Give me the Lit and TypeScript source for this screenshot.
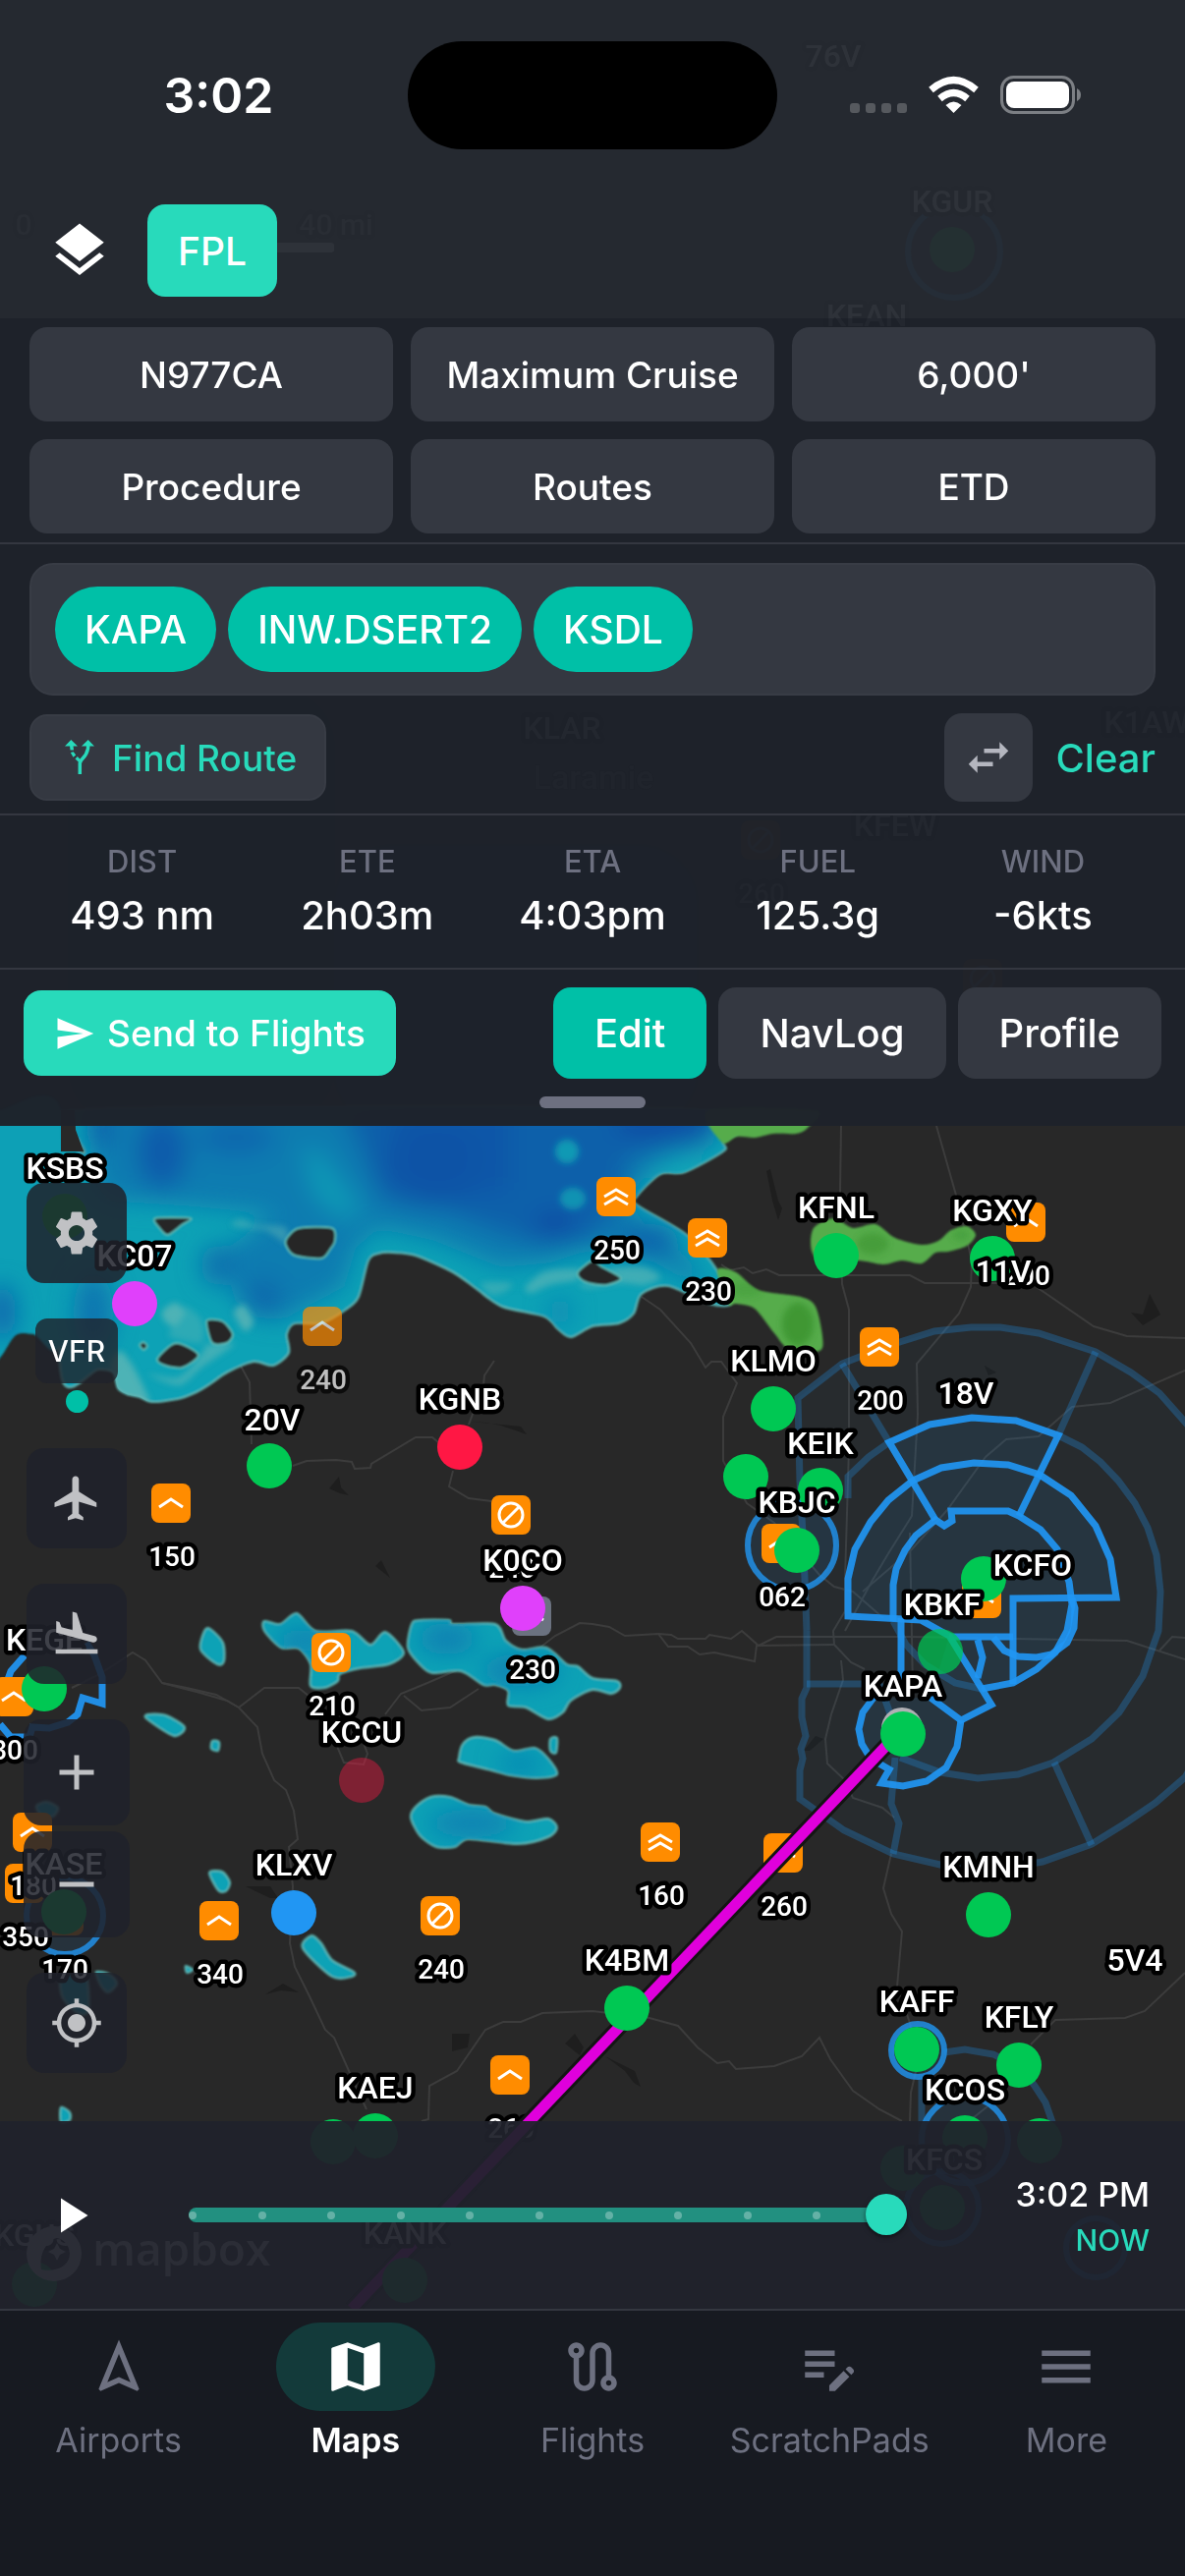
import { LitElement, html, svg, css } from "lit";
import { customElement, state } from "lit/decorators.js";
import { classMap } from "lit/directives/class-map.js";

type Pt = [number, number];

const pts = (s: string): Pt[] =>
  s.trim().split(/\s+/).map((p) => p.split(",").map(Number) as Pt);

/** Closed Catmull-Rom curve through the points, as an SVG path. */
const blob = (s: string): string => {
  const p = pts(s);
  const n = p.length;
  let d = `M${p[0][0]} ${p[0][1]}`;
  for (let i = 0; i < n; i++) {
    const a = p[(i - 1 + n) % n], b = p[i], c = p[(i + 1) % n], e = p[(i + 2) % n];
    const f = (v: number) => v.toFixed(1);
    d += `C${f(b[0] + (c[0] - a[0]) / 7)} ${f(b[1] + (c[1] - a[1]) / 7)} ${f(c[0] - (e[0] - b[0]) / 7)} ${f(c[1] - (e[1] - b[1]) / 7)} ${c[0]} ${c[1]}`;
  }
  return d + "Z";
};

const GREEN = "#00c853";
const RED = "#ff1744";
const PURPLE = "#e040fb";
const BLUE = "#2196f3";

const ROADS = [
  "73,1718 100,1705 135,1682 148,1690 165,1713 200,1722 231,1731 243,1738 262,1758 267,1785 279,1812 291,1822 299,1843 303,1872 294,1880 298,1920 295,1978 300,2002 315,2032 331,2066 340,2074 356,2110 373,2147",
  "243,1738 269,1718 304,1718 319,1730",
  "165,1713 190,1718 220,1725 243,1738",
  "392,1745 408,1724 435,1713 465,1700 492,1687 530,1692 565,1665 590,1652 603,1653 620,1656 636,1665 670,1663 680,1676 700,1676 712,1684 727,1682 768,1691 770,1675 849,1674",
  "670,1663 683,1664 690,1668 718,1668 722,1664 744,1668 755,1660 772,1675 790,1666 926,1666 1147,1670 1206,1689",
  "411,1726 429,1741 458,1738 487,1719",
  "342,1775 350,1794 370,1796 374,1785 365,1760",
  "429,2159 436,2157 437,2123 465,2108 494,2066 512,2058 530,2058 552,2049 603,2047 661,2054 690,2062 710,2084 730,2100 742,2098 749,2106 788,2103 816,2093 834,2074 845,2096 868,2128 895,2147 918,2159",
  "907,1887 899,1922 907,1948 918,1966 913,2022 926,2059 934,2100 927,2130 926,2159",
  "1206,2008 1165,2047 1145,2054 1074,2056 1049,2081",
  "1010,2140 985,2160",
  "856,1146 855,1212 857,1307 864,1333 864,1473 860,1607 860,1640 848,1660 849,1674 866,1692 880,1699",
  "856,1690 858,1710 846,1745 840,1770 842,1795 860,1812 868,1830 898,1840 910,1850",
  "953,1146 974,1220 989,1283 988,1310 976,1337 933,1388 934,1440 928,1543 903,1583 887,1610 860,1660",
  "926,1560 929,1720",
  "734,1287 743,1293 757,1290 766,1296 780,1292 793,1298 926,1298 941,1306 1049,1306 1113,1350 1147,1360 1206,1362",
  "1206,1395 1130,1428 1091,1432 1057,1462 1024,1465 1003,1483 964,1537 928,1577 878,1620",
  "653,1320 672,1333 703,1367 718,1392 724,1386 734,1386 750,1408 736,1442 736,1487 760,1530 788,1550 834,1603 849,1615 868,1620 899,1647",
  "154,1307 173,1310 175,1305 188,1313 208,1345 238,1377 254,1407 256,1470",
  "298,1492 312,1487 342,1486 358,1488 361,1495 377,1494 378,1490 423,1463 440,1463 446,1468",
  "461,1497 457,1513 477,1525 500,1528",
  "477,1450 492,1410 493,1400 503,1385",
  "1180,1680 1193,1666 1206,1667",
];

const TERRAIN = [
  "780,1192 784,1190 792,1222 796,1230 792,1242 786,1222",
  "1151,1336 1163,1338 1170,1317 1181,1338 1163,1349",
  "335,1515 345,1503 347,1514 355,1522 346,1520",
  "382,1594 388,1588 397,1606",
  "480,1447 530,1452 536,1460 510,1451 495,1448",
  "250,1920 275,1920 283,1932 275,1932",
  "270,2030 288,2019 304,2028 286,2026",
  "460,2070 478,2070 476,2084 460,2088",
  "575,2080 585,2070 594,2084 590,2092",
  "616,2093 646,2108 652,2124 645,2120 636,2108",
  "818,1782 830,1767 838,1770 824,1782",
  "1002,1390 1014,1397 1006,1400",
];

const RADAR_SMALL = [
  "269,1650 285,1653 302,1642 321,1660 358,1660 377,1674 392,1661 411,1682 396,1694 367,1698 346,1704 344,1711 331,1718 316,1716 316,1694 304,1678 286,1677 269,1660",
  "419,1653 427,1649 457,1649 461,1653 504,1653 515,1670 531,1679 556,1677 577,1694 588,1696 603,1708 628,1711 631,1718 622,1724 603,1720 581,1731 573,1743 558,1750 535,1738 517,1736 517,1721 504,1715 492,1715 469,1701 440,1703 427,1694 415,1677",
  "467,1789 471,1775 483,1768 504,1771 523,1782 544,1779 558,1790 567,1806 546,1810 519,1807 500,1802 469,1794",
  "418,1850 423,1839 438,1829 458,1829 477,1837 494,1839 504,1846 535,1854 558,1851 567,1860 558,1870 527,1877 477,1872 463,1880 444,1880 427,1868",
  "208,1660 214,1658 227,1672 228,1691 221,1694 204,1679",
  "150,1745 169,1746 188,1758 177,1767 150,1750",
  "216,1772 223,1773 222,1782 215,1780",
  "560,1770 567,1769 566,1784 560,1782",
  "213,1906 226,1905 234,1916 230,1925 222,1924",
  "317,1970 327,1978 338,1995 360,2007 358,2012 338,2012 308,1983",
  "98,2007 112,2010 119,2019 110,2028 102,2020",
  "63,2009 87,2009 90,2046 79,2049 63,2032",
  "37,1838 48,1834 59,1840 54,1849 42,1848",
  "62,2145 71,2150 71,2158 62,2160",
  "189,2001 196,2005 190,2008",
];

const RADAR_MAIN =
  "76,1130 80,1160 86,1174 62,1182 62,1400 100,1394 115,1397 120,1413 129,1419 142,1422 154,1427 181,1424 200,1417 215,1408 231,1397 258,1386 278,1390 294,1377 292,1358 300,1347 327,1347 352,1333 365,1320 375,1283 385,1276 400,1275 423,1278 461,1295 485,1312 511,1330 554,1340 568,1353 581,1361 603,1350 630,1347 645,1337 653,1317 680,1309 722,1327 744,1326 730,1293 699,1257 649,1227 648,1218 672,1195 697,1193 736,1172 736,1163 722,1130";

const HOLES = [
  "158,1240 194,1240 185,1247 171,1257 163,1251",
  "292,1260 304,1250 338,1250 341,1263 336,1272 327,1281 300,1278 291,1268",
  "210,1347 213,1343 227,1345 237,1358 231,1367 216,1367",
  "160,1383 179,1367 202,1379 186,1392 168,1390",
  "142,1369 146,1366 150,1370 146,1374",
  "588,1295 603,1283 612,1289 632,1301 618,1308 603,1307 592,1303",
];

const RADAR_LEFT = "0,1130 62,1130 62,1362 34,1358 16,1359 0,1382 -10,1382 -10,1130";

const RAIN = [
  "722,1130 830,1130 822,1148 810,1154 787,1154 768,1158 750,1157 735,1163",
  "826,1273 828,1250 849,1240 868,1250 891,1246 911,1260 938,1267 955,1263 968,1252 984,1248 993,1257 984,1268 965,1274 952,1275 938,1286 918,1283 899,1287 872,1283 840,1290",
  "730,1293 749,1295 772,1313 815,1320 830,1330 837,1360 834,1375 803,1373 788,1357 768,1332 749,1327 741,1327",
];

const AIRSPACE_FAINT = [
  "821,1660 818,1580 814,1507 812,1423 857,1388 903,1370 951,1355 988,1351 1018,1351 1057,1357 1115,1376 1151,1397 1180,1418 1211,1453 1240,1510 1256,1600 1250,1700 1230,1770 1206,1809 1176,1835 1145,1856 1111,1877 1061,1895 1007,1904 961,1899 909,1887 859,1863 814,1831 814,1802 817,1790 815,1780 820,1767 816,1748 816,1729 821,1718 821,1660",
  "863,1525 863,1503 884,1483 905,1468",
  "1077,1461 1101,1473 1120,1488 1138,1507 1155,1530 1168,1555 1177,1583 1181,1620 1179,1660 1174,1674 1163,1706 1139,1743 1111,1770 1072,1794 1036,1806 995,1810 957,1804 916,1789",
  "857,1388 905,1468",
  "1115,1376 1077,1461",
  "1073,1794 1111,1878",
  "821,1714 895,1714 908,1750",
  "911,1789 907,1836 915,1856 909,1887",
  "909,1650 922,1674 941,1694 972,1713 999,1719",
  "938,2190 938,2115",
  "961,2089 982,2086 1011,2091 1040,2106 1053,2123 1064,2140 1071,2160 1070,2185",
];

/** Filled interior of the airspace shelves, under their outlines. */
const AIRSPACE_FILL =
  "863,1645 863,1607 870,1577 886,1549 904,1527 929,1507 905,1468 946,1450 989,1443 1034,1446 1077,1461 1058,1501 1090,1522 1115,1553 1130,1587 1136,1626 1091,1630 1093,1657 1074,1682 1055,1699 1031,1713 999,1719 1009,1735 978,1751 974,1778 963,1799 943,1813 919,1818 897,1815 905,1801 886,1790 874,1760 889,1728 947,1728 966,1665 937,1649";

const AIRSPACE_STRONG = [
  "952,1547 905,1468 946,1450 989,1443 1034,1446 1077,1461 1037,1543",
  "947,1728 978,1751 1009,1735 966,1665 937,1649 863,1645 863,1607 870,1577 886,1549 904,1527 929,1507 958,1494 991,1489 1026,1491 1058,1501 1090,1522 1115,1553 1130,1587 1136,1626 1031,1627 1031,1714",
  "909,1650 909,1613 912,1597 921,1578 932,1563 952,1547 961,1553 969,1548 968,1538 1026,1538 1037,1543 1059,1557 1076,1577 1088,1610 1091,1633 1086,1660 1074,1682 1055,1699 1031,1713 999,1719",
  "1091,1627 1094,1637 1093,1657 1086,1672 1070,1684 1055,1687 1036,1686 1022,1680 1011,1667",
  "917,1647 917,1721",
  "966,1666 1031,1666",
  "995,1669 1000,1687 995,1708",
  "889,1728 878,1743 874,1760 877,1775 886,1790 905,1801 897,1815 919,1818 943,1813 963,1799 974,1778 978,1751",
  "25,1685 11,1701 6,1715",
  "88,1672 96,1685 104,1707 104,1734 84,1728 79,1745 69,1753 50,1759 33,1758 30,1768 11,1768 0,1755",
];

interface Ring { x: number; y: number; r: number }
const RINGS: Ring[] = [
  { x: 806, y: 1573, r: 45 },
  { x: 66, y: 1950, r: 39 },
  { x: 934, y: 2087, r: 27 },
  { x: 982, y: 2178, r: 44 },
  { x: 959, y: 2247, r: 37 },
  { x: 971, y: 256, r: 47 },
  { x: 1115, y: 2288, r: 30 },
];

type Kind = "single" | "double" | "slash";
interface Report { x: number; y: number; kind: Kind; level?: string; ly?: number; dim?: boolean; grey?: boolean; faint?: boolean }
const REPORTS: Report[] = [
  { x: 627, y: 1218, kind: "double", level: "250", ly: 1272 },
  { x: 720, y: 1260, kind: "double", level: "230" },
  { x: 1044, y: 1244, kind: "single", level: "200" },
  { x: 895, y: 1371, kind: "double", level: "200" },
  { x: 795, y: 1571, kind: "single", level: "062" },
  { x: 999, y: 1627, kind: "single" },
  { x: 328, y: 1350, kind: "single", level: "240", dim: true },
  { x: 174, y: 1530, kind: "single", level: "150" },
  { x: 520, y: 1542, kind: "slash", level: "240" },
  { x: 541, y: 1645, kind: "single", level: "230", grey: true },
  { x: 337, y: 1682, kind: "slash", level: "210" },
  { x: 14, y: 1727, kind: "single", level: "300" },
  { x: 33, y: 1865, kind: "single", level: "180" },
  { x: 25, y: 1917, kind: "single", level: "350" },
  { x: 65, y: 1950, kind: "single", level: "170" },
  { x: 223, y: 1955, kind: "single", level: "340" },
  { x: 448, y: 1950, kind: "slash", level: "240" },
  { x: 519, y: 2112, kind: "single", level: "260" },
  { x: 672, y: 1875, kind: "double", level: "160" },
  { x: 797, y: 1886, kind: "single", level: "260" },
  { x: 774, y: 855, kind: "slash", level: "260", faint: true },
  { x: 1000, y: 996, kind: "slash", faint: true },
];

interface Airport { id?: string; x?: number; y?: number; c?: string; lx?: number; ly?: number; o?: number }
const AIRPORTS: Airport[] = [
  { id: "KSBS", x: 66, y: 1238, c: GREEN, ly: 1188 },
  { id: "KC07", x: 137, y: 1327, c: PURPLE, ly: 1277 },
  { id: "20V", x: 274, y: 1492, c: GREEN, lx: 277, ly: 1444 },
  { id: "KGNB", x: 468, y: 1473, c: RED, ly: 1423 },
  { id: "K0CO", x: 532, y: 1637, c: PURPLE, ly: 1587 },
  { id: "KFNL", x: 851, y: 1278, c: GREEN, ly: 1228 },
  { id: "KGXY", x: 1010, y: 1281, c: GREEN, ly: 1231 },
  { id: "11V", lx: 1021, ly: 1293 },
  { id: "18V", lx: 983, ly: 1417 },
  { id: "KLMO", x: 787, y: 1434, c: GREEN, ly: 1384 },
  { x: 759, y: 1503, c: GREEN },
  { id: "KEIK", x: 835, y: 1517, c: GREEN, ly: 1468 },
  { id: "KBJC", x: 811, y: 1578, c: GREEN, ly: 1528 },
  { id: "KCFO", x: 1001, y: 1607, c: GREEN, lx: 1051, ly: 1592 },
  { id: "KBKF", x: 957, y: 1681, c: GREEN, lx: 959, ly: 1632, o: 0.72 },
  { id: "KAPA", x: 919, y: 1765, c: GREEN, ly: 1715 },
  { id: "KMNH", x: 1006, y: 1949, c: GREEN, ly: 1899 },
  { id: "5V4", lx: 1155, ly: 1994 },
  { id: "KAFF", x: 933, y: 2086, c: GREEN, ly: 2036 },
  { id: "KFLY", x: 1037, y: 2102, c: GREEN, ly: 2052 },
  { id: "KCOS", x: 982, y: 2176, c: GREEN, ly: 2126 },
  { x: 1058, y: 2179, c: GREEN },
  { x: 919, y: 2207, c: GREEN },
  { id: "KFCS", x: 959, y: 2247, c: GREEN, lx: 961, ly: 2197 },
  { x: 339, y: 2180, c: GREEN },
  { id: "KAEJ", x: 382, y: 2174, c: GREEN, ly: 2124 },
  { id: "KANK", x: 412, y: 2321, c: GREEN, ly: 2272 },
  { id: "KGUS", x: 35, y: 2325, c: GREEN, ly: 2274 },
  { id: "K4BM", x: 638, y: 2044, c: GREEN, ly: 1994 },
  { id: "KLXV", x: 299, y: 1947, c: BLUE, ly: 1897 },
  { id: "KCCU", x: 368, y: 1812, c: RED, ly: 1762, o: 0.4 },
  { id: "KEGE", x: 45, y: 1719, c: GREEN, ly: 1668 },
  { id: "KASE", x: 65, y: 1946, c: GREEN, ly: 1896 },
  { id: "KGUR", x: 969, y: 254, c: GREEN, ly: 204 },
  { id: "KEAN", lx: 882, ly: 320 },
  { id: "76V", lx: 848, ly: 56 },
  { id: "KLAR", lx: 572, ly: 740 },
  { id: "K1AW", lx: 1167, ly: 734 },
  { id: "KFEW", lx: 911, ly: 839 },
];

@customElement("route-map")
class RouteMap extends LitElement {
  static styles = css`
    :host { display: block; }
    svg { display: block; width: 100%; height: 100%; }
    text {
      font-family: Roboto, "Liberation Sans", sans-serif;
      font-weight: 500;
      text-anchor: middle;
      fill: #fff;
      stroke: #000;
      stroke-width: 9px;
      stroke-linejoin: round;
      paint-order: stroke;
    }
    .airport { font-size: 32px; }
    .level { font-size: 28px; }
    .dim { opacity: 0.7; }
    .faint-report { opacity: 0.6; }
    .scale { font-size: 30px; fill: #777; }
    .town { font-size: 34px; fill: #777; stroke-width: 2px; }
    .brand { font-family: "Open Sans", Lato, sans-serif; font-weight: 600; font-size: 46px; text-anchor: start; stroke: none; }
    .road { fill: none; stroke: #3c3c3c; stroke-width: 2px; }
    .faint { fill: none; stroke: #2196f3; stroke-opacity: 0.28; stroke-width: 7px; }
    .strong { fill: none; stroke: #2196f3; stroke-opacity: 0.92; stroke-width: 7px; }
    .ring { fill: #2196f3; fill-opacity: 0.1; stroke: #2196f3; stroke-opacity: 0.8; stroke-width: 6px; }
    .edge { stroke: #5fb8b4; stroke-width: 2px; }
    .glyph { fill: none; stroke: #fff; stroke-width: 3px; }
  `;

  private badge(r: Report) {
    const mark =
      r.kind === "slash"
        ? svg`<circle class="glyph" r="12"></circle><path class="glyph" d="M-8 8L8-8"></path>`
        : r.kind === "double"
          ? svg`<path class="glyph" d="M-12 0L0-7L12 0M-12 8L0 1L12 8"></path>`
          : svg`<path class="glyph" d="M-12 4L0-4L12 4"></path>`;
    return svg`<g class=${r.dim ? "dim" : r.faint ? "faint-report" : ""} transform="translate(${r.x} ${r.y})">
      <rect x="-20" y="-20" width="40" height="40" rx="8" fill=${r.grey ? "#6b7280" : "#ff8c00"}></rect>${mark}
    </g>`;
  }

  private level(r: Report) {
    return r.level
      ? svg`<text class="level ${r.dim ? "dim" : r.faint ? "faint-report" : ""}" x=${r.x + 1} y=${(r.ly ?? r.y + 54) + 10}>${r.level}</text>`
      : "";
  }

  render() {
    return html`<svg viewBox="0 0 1206 2622" preserveAspectRatio="xMidYMid slice" role="img" aria-label="Route map">
      <defs>
        <filter id="soft" x="-40%" y="-40%" width="180%" height="180%"><feGaussianBlur stdDeviation="12"></feGaussianBlur></filter>
        <filter id="mist" x="-40%" y="-40%" width="180%" height="180%"><feGaussianBlur stdDeviation="3"></feGaussianBlur></filter>
        <filter id="fine"><feGaussianBlur stdDeviation="1"></feGaussianBlur></filter>
        <clipPath id="wet"><path d=${blob(RADAR_MAIN)}></path><path d=${blob(RADAR_LEFT)}></path>${RADAR_SMALL.map((s) => svg`<path d=${blob(s)}></path>`)}</clipPath>
        <clipPath id="rain">${RAIN.map((s) => svg`<path d=${blob(s)}></path>`)}</clipPath>
      </defs>
      <rect width="1206" height="2622" fill="#282828"></rect>
      ${TERRAIN.map((s) => svg`<polygon points=${s} fill="#1e1e1e"></polygon>`)}
      ${ROADS.map((s) => svg`<polyline class="road" points=${s}></polyline>`)}

      <g filter="url(#fine)">
        <rect x="70" y="700" width="270" height="446" rx="60" fill="#10648a" opacity="0.3"></rect>
        <rect x="340" y="860" width="370" height="290" rx="60" fill="#10648a" opacity="0.4"></rect>
        <path class="edge" d=${blob(RADAR_MAIN)} fill="#10a2b6"></path>
        <path d=${blob(RADAR_LEFT)} fill="#10a0b6"></path>
        ${RADAR_SMALL.map((s) => svg`<path class="edge" d=${blob(s)} fill="#10a2b6"></path>`)}
      </g>
      <g clip-path="url(#wet)">
        <g filter="url(#soft)">
          <path d="M88 1120H735L725 1165L690 1178L662 1190L638 1220L655 1245L700 1280L725 1312L690 1298L665 1284L600 1272L560 1285L510 1290L440 1262L385 1250L362 1270L350 1310L315 1328L285 1345L240 1325L225 1275L280 1236L200 1228L110 1222L95 1200Z" fill="#107cb0"></path>
          <path d="M345 1120H740L725 1155L680 1165L640 1180L632 1230L600 1262L550 1268L500 1252L440 1228L392 1224L375 1190Z" fill="#0f61aa"></path>
          <path d="M400 1130H520V1210L430 1232L385 1200Z" fill="#0e57a8"></path>
          <ellipse cx="165" cy="1172" rx="26" ry="38" fill="#0e5cab"></ellipse>
          <ellipse cx="102" cy="1150" rx="14" ry="18" fill="#0e60ac"></ellipse>
          <ellipse cx="240" cy="1158" rx="40" ry="18" fill="#1068ae"></ellipse>
          <ellipse cx="445" cy="1178" rx="40" ry="36" fill="#0d52a6"></ellipse>
          <ellipse cx="565" cy="1246" rx="22" ry="12" fill="#0c4ca4"></ellipse>
          <ellipse cx="675" cy="1145" rx="50" ry="18" fill="#0c4fa6"></ellipse>
          <ellipse cx="222" cy="1288" rx="18" ry="20" fill="#0f6fae"></ellipse>
          <ellipse cx="268" cy="1322" rx="18" ry="20" fill="#0f68ac"></ellipse>
          <ellipse cx="95" cy="1335" rx="20" ry="40" fill="#0f76b0"></ellipse>
          <ellipse cx="2" cy="1335" rx="14" ry="28" fill="#0f66ae"></ellipse>
          <ellipse cx="660" cy="1262" rx="30" ry="16" fill="#0f62ac"></ellipse>
          <ellipse cx="570" cy="1335" rx="12" ry="16" fill="#0f88b4"></ellipse>
          <path d="M308 1170L322 1170L350 1205L370 1235L345 1242L318 1215Z" fill="#1098b6"></path>
          <ellipse cx="692" cy="1192" rx="22" ry="10" fill="#12a8b8"></ellipse>
          <ellipse cx="455" cy="1668" rx="30" ry="16" fill="#0f80b2"></ellipse>
          <ellipse cx="530" cy="1700" rx="40" ry="16" fill="#0f80b2"></ellipse>
          <ellipse cx="310" cy="1670" rx="30" ry="12" fill="#0f80b2"></ellipse>
          <ellipse cx="480" cy="1856" rx="44" ry="14" fill="#0f80b2"></ellipse>
          <ellipse cx="530" cy="1795" rx="24" ry="8" fill="#0f80b2"></ellipse>
        </g>
        <g fill="#12a8b6" filter="url(#mist)">
          <ellipse cx="577" cy="1172" rx="12" ry="12" opacity="0.8"></ellipse>
          <ellipse cx="583" cy="1220" rx="13" ry="11" opacity="0.7"></ellipse>
        </g>
        <g fill="#63b8b6" filter="url(#mist)" opacity="0.75">
          <path d=${blob("122,1375 135,1390 150,1420 150,1428 118,1420 112,1390")}></path>
          <path d=${blob("165,1335 178,1326 188,1336 178,1350 168,1345")}></path>
          <path d=${blob("238,1335 248,1328 258,1345 250,1355 242,1345")}></path>
          <path d=${blob("150,1398 182,1402 205,1378 212,1368 238,1368 205,1392 182,1410")} opacity="0.8"></path>
          <path d=${blob("188,1330 206,1345 206,1366 192,1366 172,1360 176,1350")} opacity="0.5"></path>
          <path d=${blob("535,1310 555,1294 590,1292 588,1302 560,1308 540,1316")} opacity="0.8"></path>
          <path d=${blob("620,1292 655,1290 672,1300 655,1308 632,1306 600,1311 590,1306 620,1305")} opacity="0.8"></path>
          <path d=${blob("490,1306 520,1306 515,1314 500,1318")} opacity="0.6"></path>
          <path d=${blob("235,1246 246,1241 262,1247 290,1249 292,1266 270,1252 246,1250")} opacity="0.6"></path>
        </g>
      </g>
      <polygon points="62,1130 76,1130 77,1150 85,1172 62,1172" fill="#282828"></polygon>
      <g filter="url(#fine)">
        ${HOLES.map((s) => svg`<path class="edge" d=${blob(s)} fill="#282828"></path>`)}
        ${RAIN.map((s) => svg`<path d=${blob(s)} fill="#57ac4c"></path>`)}
      </g>
      <g clip-path="url(#rain)" fill="#3a932f" filter="url(#mist)" opacity="0.8">
        <ellipse cx="888" cy="1266" rx="16" ry="11" opacity="0.7"></ellipse>
        <ellipse cx="812" cy="1348" rx="16" ry="22"></ellipse>
        <ellipse cx="760" cy="1312" rx="16" ry="8" opacity="0.4"></ellipse>
        <ellipse cx="978" cy="1257" rx="9" ry="6" opacity="0.5"></ellipse>
      </g>

      <polygon points=${AIRSPACE_FAINT[0]} fill="#2196f3" fill-opacity="0.03"></polygon>
      <polygon points=${AIRSPACE_FILL} fill="#2196f3" fill-opacity="0.09"></polygon>
      ${AIRSPACE_FAINT.map((s) => svg`<polyline class="faint" points=${s}></polyline>`)}
      ${AIRSPACE_STRONG.map((s) => svg`<polyline class="strong" points=${s}></polyline>`)}
      ${RINGS.map((r) => svg`<circle class="ring" cx=${r.x} cy=${r.y} r=${r.r}></circle>`)}

      ${REPORTS.map((r) => this.badge(r))}
      ${REPORTS.map((r) => this.level(r))}

      <line x1="918" y1="1760" x2="358" y2="2350" stroke="#141414" stroke-width="17"></line>
      <line x1="918" y1="1760" x2="358" y2="2350" stroke="#e000dc" stroke-width="11"></line>
      <circle cx="918" cy="1759" r="21" fill="#b0b0b4"></circle>

      ${AIRPORTS.map((a) => a.c ? svg`<circle cx=${a.x} cy=${a.y} r="23" fill=${a.c} opacity=${a.o ?? 1}></circle>` : "")}
      ${AIRPORTS.map((a) => a.id ? svg`<text class="airport" x=${a.lx ?? a.x} y=${(a.ly ?? 0) + 12}>${a.id}</text>` : "")}

      <text class="town" x="604" y="803">Laramie</text>
      <text class="scale" x="24" y="239">0</text>
      <text class="scale" x="342" y="239">40 mi</text>
      <rect x="150" y="247" width="190" height="10" rx="3" fill="#fff"></rect>
      <g fill="#fff">
        <path fill-rule="evenodd" d="M55 2266a28 28 0 1 0 0 56a28 28 0 1 0 0-56ZM58 2278a16 16 0 0 1 8 27c-7 7-20 6-24 5c-1-5-1-16 5-24a15 15 0 0 1 11-8Z"></path>
        <path d="M58 2283l3 6l6 3l-6 3l-3 6l-3-6l-6-3l6-3Z"></path>
        <text class="brand" x="94" y="2306">mapbox</text>
      </g>
    </svg>`;
  }
}

const ICONS: Record<string, string> = {
  layers: "M11.99 18.54l-7.37-5.73L3 14.07l9 7 9-7-1.63-1.27zM12 16l7.36-5.73L21 9l-9-7-9 7 1.63 1.27z",
  swap: "M6.99 11L3 15l3.99 4v-3H14v-2H6.99v-3zM21 9l-3.99-4v3H10v2h7.01v3L21 9z",
  send: "M2.01 21L23 12 2.01 3 2 10l15 2-15 2z",
  settings: "M19.14 12.94c.04-.3.06-.61.06-.94 0-.32-.02-.64-.07-.94l2.03-1.58c.18-.14.23-.41.12-.61l-1.92-3.32c-.12-.22-.37-.29-.59-.22l-2.39.96c-.5-.38-1.03-.7-1.62-.94l-.36-2.54c-.04-.24-.24-.41-.48-.41h-3.84c-.24 0-.43.17-.47.41l-.36 2.54c-.59.24-1.13.57-1.62.94l-2.39-.96c-.22-.08-.47 0-.59.22L2.74 8.87c-.12.21-.08.47.12.61l2.03 1.58c-.05.3-.09.63-.09.94s.02.64.07.94l-2.03 1.58c-.18.14-.23.41-.12.61l1.92 3.32c.12.22.37.29.59.22l2.39-.96c.5.38 1.03.7 1.62.94l.36 2.54c.05.24.24.41.48.41h3.84c.24 0 .44-.17.47-.41l.36-2.54c.59-.24 1.13-.56 1.62-.94l2.39.96c.22.08.47 0 .59-.22l1.92-3.32c.12-.22.07-.47-.12-.61l-2.01-1.58zM12 15.6c-1.98 0-3.6-1.62-3.6-3.6s1.62-3.6 3.6-3.6 3.6 1.62 3.6 3.6-1.62 3.6-3.6 3.6z",
  flight: "M21 16v-2l-8-5V3.5c0-.83-.67-1.5-1.5-1.5S10 2.67 10 3.5V9l-8 5v2l8-2.5V19l-2 1.5V22l3.5-1 3.5 1v-1.5L13 19v-5.5l8 2.5z",
  land: "M2.5 19h19v2h-19zM19.34 15.85c.8.21 1.62-.26 1.84-1.06.21-.8-.26-1.62-1.06-1.84l-5.31-1.42-2.76-9.02L10.12 2v8.28L5.15 8.95l-.93-2.32-1.45-.39v5.17l16.57 4.44z",
  add: "M19 13h-6v6h-2v-6H5v-2h6V5h2v6h6v2z",
  remove: "M19 13H5v-2h14v2z",
  gps: "M12 8c-2.21 0-4 1.79-4 4s1.79 4 4 4 4-1.79 4-4-1.79-4-4-4zm8.94 3c-.46-4.17-3.77-7.48-7.94-7.94V1h-2v2.06C6.83 3.52 3.52 6.83 3.06 11H1v2h2.06c.46 4.17 3.77 7.48 7.94 7.94V23h2v-2.06c4.17-.46 7.48-3.77 7.94-7.94H23v-2h-2.06zM12 19c-3.87 0-7-3.13-7-7s3.13-7 7-7 7 3.13 7 7-3.13 7-7 7z",
  play: "M8 5v14l11-7z",
  airports: "M12 7.27l4.28 10.43-3.47-1.53-.81-.36-.81.36-3.47 1.53L12 7.27M12 2L4.5 20.29l.71.71L12 18l6.79 3 .71-.71L12 2z",
  maps: "M20.5 3l-.16.03L15 5.1 9 3 3.36 4.9c-.21.07-.36.25-.36.48V20.5c0 .28.22.5.5.5l.16-.03L9 18.9l6 2.1 5.64-1.9c.21-.07.36-.25.36-.48V3.5c0-.28-.22-.5-.5-.5zM15 19l-6-2.11V5l6 2.11V19z",
  flights: "M19 15.18V7c0-2.21-1.79-4-4-4s-4 1.79-4 4v10c0 1.1-.9 2-2 2s-2-.9-2-2V8.82C8.16 8.4 9 7.3 9 6c0-1.66-1.34-3-3-3S3 4.34 3 6c0 1.3.84 2.4 2 2.82V17c0 2.21 1.79 4 4 4s4-1.79 4-4V7c0-1.1.9-2 2-2s2 .9 2 2v8.18c-1.16.41-2 1.51-2 2.82 0 1.66 1.34 3 3 3s3-1.34 3-3c0-1.3-.84-2.4-2-2.82zM6 7c-.55 0-1-.45-1-1s.45-1 1-1 1 .45 1 1-.45 1-1 1zm12 12c-.55 0-1-.45-1-1s.45-1 1-1 1 .45 1 1-.45 1-1 1z",
  scratch: "M3 10h11v2H3v-2zm0-2h11V6H3v2zm0 8h7v-2H3v2zm15.01-3.13l.71-.71c.39-.39 1.02-.39 1.41 0l.71.71c.39.39.39 1.02 0 1.41l-.71.71-2.12-2.12zm-.71.71l-5.3 5.3V21h2.12l5.3-5.3-2.12-2.12z",
  more: "M3 18h18v-2H3v2zm0-5h18v-2H3v2zm0-7v2h18V6H3z",
};

const icon = (name: string, size = "m") =>
  html`<svg class="icon ${size}" viewBox="0 0 24 24" aria-hidden="true"><path d=${ICONS[name]}></path></svg>`;

@customElement("app-root")
class AppRoot extends LitElement {
  @state() private tab = "Maps";
  @state() private view = "Edit";

  static styles = css`
    :host {
      display: block;
      font-family: Inter, Roboto, "Liberation Sans", sans-serif;
      color: #fff;
    }
    * { box-sizing: border-box; }
    button, input { font: inherit; color: inherit; margin: 0; }
    button { border: 0; padding: 0; background: none; display: flex; align-items: center; justify-content: center; white-space: nowrap; cursor: pointer; }
    a { color: inherit; text-decoration: none; }
    .screen { position: relative; display: flex; flex-direction: column; min-height: 100vh; overflow: hidden; background: #282828; }
    .backdrop { position: absolute; inset: 0; }
    .layer { position: relative; }
    .icon { display: block; fill: currentColor; flex: none; }
    .s { width: 42px; height: 42px; }
    .m { width: 54px; height: 54px; }
    .p { width: 60px; height: 60px; }
    .l { width: 66px; height: 66px; }

    .top { background: rgba(37, 42, 49, 0.96); padding: 42px 0 22px; }
    .status { display: grid; grid-template-columns: 1fr 376px 1fr; align-items: center; }
    .time { text-align: center; padding-left: 30px; font-size: 50px; font-weight: 600; line-height: 60px; }
    .island { height: 110px; border-radius: 55px; background: #000; }
    .signals { display: block; width: 236px; height: 40px; justify-self: end; margin-right: 105px; }
    .toolbar { display: flex; align-items: center; gap: 36px; padding: 56px 48px 0; }
    .fpl { width: 132px; height: 94px; border-radius: 18px; background: #28dabb; font-size: 39px; font-weight: 500; }

    .panel { background: rgba(30, 34, 42, 0.975); }
    .setup { display: grid; grid-template-columns: repeat(3, 1fr); gap: 18px; padding: 9px 30px; border-bottom: 2px solid #343740; }
    .tile { height: 96px; border-radius: 18px; background: #343841; font-size: 37px; font-weight: 500; }
    .route { display: flex; flex-direction: column; gap: 18px; padding: 19px 30px 12px; border-bottom: 2px solid #343740; }
    .waypoints { display: flex; gap: 12px; padding: 22px 24px; border: 2px solid #383c45; border-radius: 24px; background: #343841; }
    .chip { height: 87px; padding: 0 30px; border-radius: 44px; background: #00c0a7; font-size: 39px; font-weight: 500; }
    .actions { display: flex; align-items: center; }
    .find { height: 88px; gap: 18px; padding: 0 28px 0 34px; border: 2px solid #383c45; border-radius: 18px; background: #343841; color: #28dabb; font-size: 37px; font-weight: 500; }
    .fork { width: 30px; height: 36px; fill: currentColor; }
    .swap { width: 90px; height: 90px; margin-left: auto; border-radius: 18px; background: #343841; color: #b4b6bf; }
    .clear { margin-left: 24px; color: #28dabb; font-size: 40px; font-weight: 500; }
    .stats { display: grid; grid-template-columns: repeat(5, 1fr); margin: 0; padding: 27px 30px 26px; border-bottom: 2px solid #343740; text-align: center; }
    .stats dt { color: #6d7080; font-size: 31px; font-weight: 500; line-height: 40px; }
    .stats dd { margin: 8px 0 0; font-size: 40px; font-weight: 500; line-height: 54px; }
    .modes { display: flex; align-items: center; gap: 12px; padding: 18px 24px 18px; }
    .send { height: 87px; gap: 12px; padding: 0 31px; margin-right: auto; border-radius: 18px; background: #28dabb; font-size: 37px; font-weight: 500; }
    .mode { height: 93px; padding: 0 42px; border-radius: 18px; background: #343841; font-size: 40px; font-weight: 500; }
    .mode.on { background: #00c0a7; }
    .grip { display: block; width: 108px; height: 12px; margin: 0 auto; border-radius: 6px; background: #6d7080; }
    .panel-end { padding-bottom: 18px; }

    .stage { flex: 1; display: flex; }
    .tools { display: flex; flex-direction: column; align-items: center; gap: 36px; padding: 58px 24px 48px; color: #c0c1c4; }
    .tool { width: 102px; height: 102px; border-radius: 18px; background: rgba(31, 34, 43, 0.86); }
    .zoom { display: flex; flex-direction: column; gap: 6px; }
    .zoom .tool { width: 108px; height: 108px; }
    .rules { display: flex; flex-direction: column; align-items: center; gap: 7px; }
    .vfr { width: 84px; height: 66px; border-radius: 12px; background: rgba(31, 34, 43, 0.8); color: #fff; font-size: 30px; font-weight: 500; }
    .dot { width: 23px; height: 23px; border-radius: 50%; background: #00c0a7; }

    .timeline { display: flex; align-items: center; height: 191px; padding: 0 36px 0 42px; background: rgba(32, 34, 43, 0.95); }
    .scrub { position: relative; flex: 1; margin: 0 111px 0 90px; height: 42px; display: flex; align-items: center; }
    .range { appearance: none; -webkit-appearance: none; width: 100%; height: 42px; background: none; }
    .range::-webkit-slider-runnable-track { height: 15px; border-radius: 8px; background: #229080; }
    .range::-webkit-slider-thumb { -webkit-appearance: none; width: 42px; height: 42px; margin-top: -14px; border-radius: 50%; background: #28dabb; box-shadow: 0 2px 5px rgba(0, 0, 0, 0.5); }
    .ticks { position: absolute; inset: 0 87px 0 0; display: flex; align-items: center; justify-content: space-between; pointer-events: none; }
    .tick { width: 8px; height: 8px; border-radius: 50%; background: rgba(255, 255, 255, 0.3); }
    .clock { padding-top: 4px; text-align: right; white-space: nowrap; }
    .now-time { font-size: 34px; font-weight: 500; line-height: 46px; }
    .now { color: #28dabb; font-size: 30px; font-weight: 500; line-height: 46px; }

    .nav { display: grid; grid-template-columns: repeat(5, 1fr); height: 272px; padding-top: 12px; border-top: 2px solid #343740; background: #171a21; color: #6d7080; }
    .item { display: flex; flex-direction: column; align-items: center; gap: 7px; font-size: 34px; line-height: 46px; }
    .pill { display: flex; align-items: center; justify-content: center; width: 162px; height: 90px; border-radius: 45px; }
    .item.on { color: #fff; font-weight: 600; }
    .item.on .pill { background: #133a3a; }
  `;

  render() {
    const stats = [["DIST", "493 nm"], ["ETE", "2h03m"], ["ETA", "4:03pm"], ["FUEL", "125.3g"], ["WIND", "-6kts"]];
    const tabs = [["Airports", "airports"], ["Maps", "maps"], ["Flights", "flights"], ["ScratchPads", "scratch"], ["More", "more"]];
    return html`<div class="screen">
      <route-map class="backdrop"></route-map>

      <header class="layer top">
        <div class="status">
          <span class="time">3:02</span>
          <span class="island"></span>
          <svg class="signals" viewBox="0 0 236 40" aria-hidden="true">
            <g fill="#56595e"><rect x="0" y="28" width="10" height="10" rx="3"></rect><rect x="16" y="28" width="10" height="10" rx="3"></rect><rect x="32" y="28" width="10" height="10" rx="3"></rect><rect x="48" y="28" width="10" height="10" rx="3"></rect></g>
            <g fill="#fff"><path d="M105.500 38l-8-8q8-7 16 0Z"></path></g>
            <g fill="none" stroke="#fff" stroke-width="7"><path d="M82.500 14.500q23-20 46 0"></path><path d="M91.500 23.500q14-12 28 0"></path></g>
            <rect x="154.500" y="1.500" width="73" height="36" rx="12" fill="none" stroke="#7c7f84" stroke-width="3"></rect>
            <rect x="159" y="6" width="64" height="27" rx="8" fill="#fff"></rect>
            <path d="M231 13q4 2 4 6.500t-4 6.500Z" fill="#7c7f84"></path>
          </svg>
        </div>
        <div class="toolbar">
          <button aria-label="Layers">${icon("layers", "l")}</button>
          <button class="fpl">FPL</button>
        </div>
      </header>

      <section class="layer panel" aria-label="Flight plan">
        <div class="setup">
          ${["N977CA", "Maximum Cruise", "6,000'", "Procedure", "Routes", "ETD"].map((t) => html`<button class="tile">${t}</button>`)}
        </div>
        <div class="route">
          <div class="waypoints">
            ${["KAPA", "INW.DSERT2", "KSDL"].map((t) => html`<button class="chip">${t}</button>`)}
          </div>
          <div class="actions">
            <button class="find">
              <svg class="fork" viewBox="0 0 30 36" aria-hidden="true">
                <path d="M6.300 0L13 6.500H0ZM23.700 0L30 6.500H17ZM5 6h3.500l.5 4.500H5.500ZM5.800 13l3-.8 2.400 3.300-2.700 2.300ZM10.500 19.500l2.300-2.500 3 3-2 2.500Z"></path>
                <path d="M15.300 35V24c0-5 8.400-6 8.400-18" fill="none" stroke="currentColor" stroke-width="3.500"></path>
              </svg>
              Find Route
            </button>
            <button class="swap" aria-label="Reverse route">${icon("swap")}</button>
            <button class="clear">Clear</button>
          </div>
        </div>
        <dl class="stats">
          ${stats.map(([k, v]) => html`<div><dt>${k}</dt><dd>${v}</dd></div>`)}
        </dl>
        <div class="modes">
          <button class="send">${icon("send", "s")}Send to Flights</button>
          ${["Edit", "NavLog", "Profile"].map((t) => html`<button
            class=${classMap({ mode: true, on: this.view === t })}
            aria-pressed=${this.view === t}
            @click=${() => (this.view = t)}>${t}</button>`)}
        </div>
        <div class="panel-end"><span class="grip"></span></div>
      </section>

      <main class="layer stage">
        <div class="tools">
          <button class="tool" aria-label="Map settings">${icon("settings")}</button>
          <div class="rules"><button class="vfr">VFR</button><span class="dot"></span></div>
          <button class="tool" aria-label="Aircraft">${icon("flight")}</button>
          <button class="tool" aria-label="Landing">${icon("land")}</button>
          <div class="zoom">
            <button class="tool" aria-label="Zoom in">${icon("add", "p")}</button>
            <button class="tool" aria-label="Zoom out">${icon("remove", "p")}</button>
          </div>
          <button class="tool" aria-label="My location">${icon("gps")}</button>
        </div>
      </main>

      <section class="layer timeline" aria-label="Weather time">
        <button aria-label="Play">${icon("play", "p")}</button>
        <div class="scrub">
          <input class="range" type="range" min="0" max="10" value="10" aria-label="Radar time" />
          <div class="ticks">${Array.from({ length: 10 }, () => html`<span class="tick"></span>`)}</div>
        </div>
        <div class="clock"><div class="now-time">3:02 PM</div><div class="now">NOW</div></div>
      </section>

      <nav class="layer nav">
        ${tabs.map(([t, i]) => html`<a href="#${i}" class=${classMap({ item: true, on: this.tab === t })}
          @click=${() => (this.tab = t)}><span class="pill">${icon(i, "l")}</span>${t}</a>`)}
      </nav>
    </div>`;
  }
}
